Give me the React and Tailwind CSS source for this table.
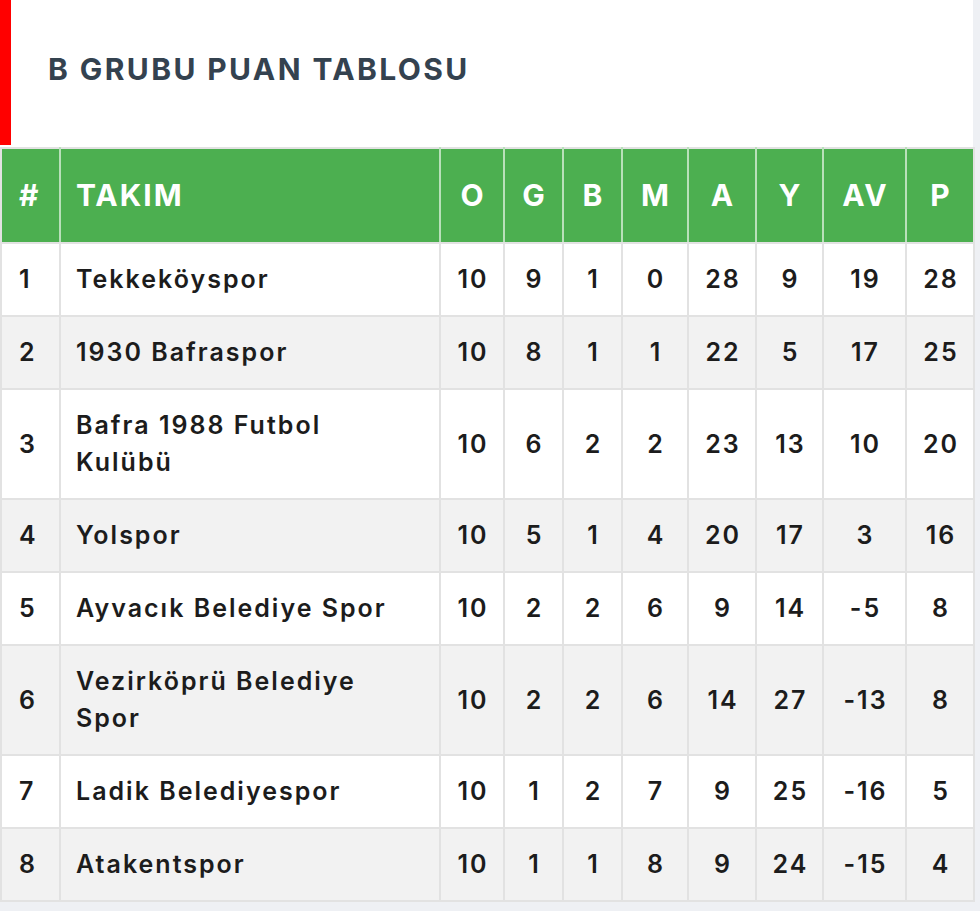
const rows = [
  [1, "Tekkeköyspor", 10, 9, 1, 0, 28, 9, 19, 28],
  [2, "1930 Bafraspor", 10, 8, 1, 1, 22, 5, 17, 25],
  [3, "Bafra 1988 Futbol Kulübü", 10, 6, 2, 2, 23, 13, 10, 20],
  [4, "Yolspor", 10, 5, 1, 4, 20, 17, 3, 16],
  [5, "Ayvacık Belediye Spor", 10, 2, 2, 6, 9, 14, -5, 8],
  [6, "Vezirköprü Belediye Spor", 10, 2, 2, 6, 14, 27, -13, 8],
  [7, "Ladik Belediyespor", 10, 1, 2, 7, 9, 25, -16, 5],
  [8, "Atakentspor", 10, 1, 1, 8, 9, 24, -15, 4],
];

const cols = ["O", "G", "B", "M", "A", "Y", "AV", "P"];
const widths = [
  "w-[64px]",
  "w-[59px]",
  "w-[59px]",
  "w-[66px]",
  "w-[68px]",
  "w-[67px]",
  "w-[83px]",
  "w-[68px]",
];

export default function App() {
  return (
    <div
      className="min-h-[911px] bg-[#eef0f4] pb-[8px]"
      style={{ fontFamily: "Inter, 'Noto Sans', sans-serif" }}
    >
      <div className="w-[973px] bg-white">
        <div className="flex h-[147px] items-start">
          <div className="flex h-[145px] flex-1 items-center border-l-[11px] border-[#ff0000] pb-[6px] pl-[37px]">
            <h2 className="text-[30px] font-bold tracking-[2.4px] text-[#34424f]">
              B GRUBU PUAN TABLOSU
            </h2>
          </div>
        </div>
        <table className="w-[973px] table-fixed border-collapse text-[25px] font-semibold leading-[37px] tracking-[2px] text-[#1c1c1c]">
          <thead>
            <tr className="h-[95px] bg-[#4caf50] text-[30px] font-bold tracking-[2px] text-white">
              <th className="w-[59px] border-2 border-[#e2e2e2] border-r-[#b9e0ba] pl-[17px] text-left">
                #
              </th>
              <th className="w-[380px] border-2 border-[#e2e2e2] border-x-[#b9e0ba] pl-[15px] text-left">
                TAKIM
              </th>
              {cols.map((c, i) => (
                <th
                  key={c}
                  className={`${widths[i]} border-2 border-[#e2e2e2] border-x-[#b9e0ba] pl-[2px] text-center last:border-r-[#e2e2e2]`}
                >
                  {c}
                </th>
              ))}
            </tr>
          </thead>
          <tbody>
            {rows.map((r) => (
              <tr key={r[0]} className="even:bg-[#f2f2f2]">
                <td className="border-2 border-[#e2e2e2] py-[17px] pl-[17px] text-left">
                  {r[0]}
                </td>
                <td className="border-2 border-[#e2e2e2] py-[17px] pl-[15px] pr-[19px] text-left">
                  {r[1]}
                </td>
                {r.slice(2).map((v, i) => (
                  <td
                    key={i}
                    className="border-2 border-[#e2e2e2] py-[17px] pl-[2px] text-center"
                  >
                    {v}
                  </td>
                ))}
              </tr>
            ))}
          </tbody>
        </table>
      </div>
    </div>
  );
}
